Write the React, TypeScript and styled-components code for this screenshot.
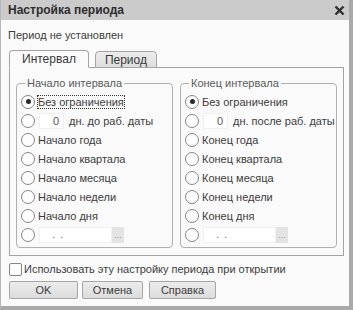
import React from "react";
import styled, { createGlobalStyle } from "styled-components";

const GlobalStyle = createGlobalStyle`
  body {
    margin: 0;
    background: #ffffff;
    font-family: "Liberation Sans", Arial, sans-serif;
  }
`;

const Window = styled.div`
  width: 353px;
  height: 310px;
  box-sizing: border-box;
  display: flex;
  flex-direction: column;
  background: #fafafa;
  border-left: 1px solid #b8b8b8;
  border-right: 4px solid #a9a9a9;
  border-bottom: 4px solid #a9a9a9;
  color: #3c3c3c;
  font-size: 11px;
`;

const TitleBar = styled.div`
  height: 20px;
  flex: none;
  display: flex;
  align-items: center;
  justify-content: space-between;
  padding: 0 4px 0 7px;
  background: #cbcbcb;
  font-size: 12px;
  font-weight: bold;
  color: #2e2e2e;
`;

const Body = styled.div`
  display: flex;
  flex-direction: column;
  padding: 0 5px 0 7px;
`;

const Status = styled.div`
  margin-top: 8px;
  height: 14px;
  line-height: 14px;
`;

const Tabs = styled.div`
  display: flex;
  align-items: flex-end;
  gap: 6px;
  margin: 8px 0 -1px 1px;
  position: relative;
  z-index: 1;
`;

const Tab = styled.div<{ $active?: boolean }>`
  height: ${(p) => (p.$active ? 18 : 17)}px;
  box-sizing: border-box;
  padding: 0 ${(p) => (p.$active ? 12 : 9)}px;
  display: flex;
  align-items: center;
  font-size: 12px;
  border: 1px solid #a4a4a4;
  border-radius: 4px 4px 0 0;
  border-bottom-color: ${(p) => (p.$active ? "#fafafa" : "#a4a4a4")};
  background: ${(p) =>
    p.$active ? "#fafafa" : "linear-gradient(#ececec, #dedede)"};
  color: #3a3a3a;
`;

const Panel = styled.div`
  margin-left: 1px;
  height: 189px;
  box-sizing: border-box;
  border: 1px solid #a4a4a4;
  padding: 9px 6px 0 6px;
  display: grid;
  grid-template-columns: 157px 157px;
  gap: 7px;
`;

const Group = styled.fieldset`
  margin: 0;
  height: 171px;
  box-sizing: border-box;
  border: 1px solid #b0b0b0;
  border-radius: 4px;
  padding: 2px 0 0 4px;
  display: flex;
  flex-direction: column;
`;

const Legend = styled.legend`
  margin-left: 4px;
  padding: 0 2px;
  color: #5a5a5a;
  font-size: 11px;
  line-height: 13px;
`;

const Row = styled.div`
  height: 19px;
  display: flex;
  align-items: center;
  white-space: nowrap;
`;

const Radio = styled.span<{ $checked?: boolean }>`
  width: 14px;
  height: 14px;
  flex: none;
  box-sizing: border-box;
  border-radius: 50%;
  border: 1px solid #858585;
  background: #fdfdfd;
  margin-right: 2px;
  display: flex;
  align-items: center;
  justify-content: center;

  &::after {
    content: "";
    width: 5px;
    height: 5px;
    border-radius: 50%;
    background: #2a2a2a;
    display: ${(p) => (p.$checked ? "block" : "none")};
  }
`;

const Label = styled.span<{ $focused?: boolean }>`
  padding: 1px 1px;
  outline: ${(p) => (p.$focused ? "1px dotted #333" : "none")};
  outline-offset: -1px;
`;

const NumBox = styled.span`
  width: 25px;
  height: 16px;
  box-sizing: border-box;
  margin: 0 4px 0 2px;
  padding-right: 4px;
  text-align: right;
  line-height: 14px;
  background: #ffffff;
  border: 1px solid #f0f0f0;
  color: #555;
`;

const DateBox = styled.span`
  width: 73px;
  height: 16px;
  box-sizing: border-box;
  margin-left: 2px;
  padding-left: 12px;
  line-height: 12px;
  letter-spacing: 5px;
  background: #ffffff;
  border: 1px solid #f0f0f0;
  color: #777;
`;

const PickButton = styled.span`
  width: 12px;
  height: 16px;
  box-sizing: border-box;
  background: #e3e3e3;
  color: #9a9a9a;
  font-size: 9px;
  line-height: 16px;
  text-align: center;
`;

const CheckRow = styled.div`
  margin-top: 5px;
  height: 16px;
  display: flex;
  align-items: center;
  font-size: 11px;
`;

const Check = styled.span`
  width: 13px;
  height: 13px;
  box-sizing: border-box;
  border: 1px solid #858585;
  border-radius: 2px;
  background: #fdfdfd;
  margin: 0 2px 0 1px;
`;

const Buttons = styled.div`
  margin-top: 4px;
  display: flex;
  gap: 4px;
`;

const Button = styled.button<{ $w: number; $gap?: number }>`
  width: ${(p) => p.$w}px;
  height: 18px;
  margin-left: ${(p) => p.$gap ?? 0}px;
  padding: 0;
  border: 1px solid #a6a6a6;
  border-radius: 2px;
  background: linear-gradient(#ececec, #dcdcdc);
  font-family: "Liberation Sans", Arial, sans-serif;
  font-size: 11px;
  font-weight: 400;
  color: #3c3c3c;
`;

type Item = { label: string; kind?: "num" | "date"; suffix?: string };

const startItems: Item[] = [
  { label: "Без ограничения" },
  { label: "", kind: "num", suffix: "дн. до раб. даты" },
  { label: "Начало года" },
  { label: "Начало квартала" },
  { label: "Начало месяца" },
  { label: "Начало недели" },
  { label: "Начало дня" },
  { label: "", kind: "date" },
];

const endItems: Item[] = [
  { label: "Без ограничения" },
  { label: "", kind: "num", suffix: "дн. после раб. даты" },
  { label: "Конец года" },
  { label: "Конец квартала" },
  { label: "Конец месяца" },
  { label: "Конец недели" },
  { label: "Конец дня" },
  { label: "", kind: "date" },
];

const IntervalGroup: React.FC<{ title: string; items: Item[]; focused?: boolean }> = ({
  title,
  items,
  focused,
}) => (
  <Group>
    <Legend>{title}</Legend>
    {items.map((it, i) => (
      <Row key={i}>
        <Radio $checked={i === 0} />
        {it.kind === "num" && (
          <>
            <NumBox>0</NumBox>
            <Label>{it.suffix}</Label>
          </>
        )}
        {it.kind === "date" && (
          <>
            <DateBox>..</DateBox>
            <PickButton>...</PickButton>
          </>
        )}
        {!it.kind && <Label $focused={focused && i === 0}>{it.label}</Label>}
      </Row>
    ))}
  </Group>
);

const CloseIcon = () => (
  <svg width="11" height="11" viewBox="0 0 11 11">
    <path d="M1.5 1.5 L9.5 9.5 M9.5 1.5 L1.5 9.5" stroke="#2e2e2e" strokeWidth="2.4" />
  </svg>
);

export default function App() {
  return (
    <>
      <GlobalStyle />
      <Window>
        <TitleBar>
          <span>Настройка периода</span>
          <CloseIcon />
        </TitleBar>
        <Body>
          <Status>Период не установлен</Status>
          <Tabs>
            <Tab $active>Интервал</Tab>
            <Tab>Период</Tab>
          </Tabs>
          <Panel>
            <IntervalGroup title="Начало интервала" items={startItems} focused />
            <IntervalGroup title="Конец интервала" items={endItems} />
          </Panel>
          <CheckRow>
            <Check />
            Использовать эту настройку периода при открытии
          </CheckRow>
          <Buttons>
            <Button $w={69} $gap={1}>OK</Button>
            <Button $w={61}>Отмена</Button>
            <Button $w={67} $gap={2}>Справка</Button>
          </Buttons>
        </Body>
      </Window>
    </>
  );
}
